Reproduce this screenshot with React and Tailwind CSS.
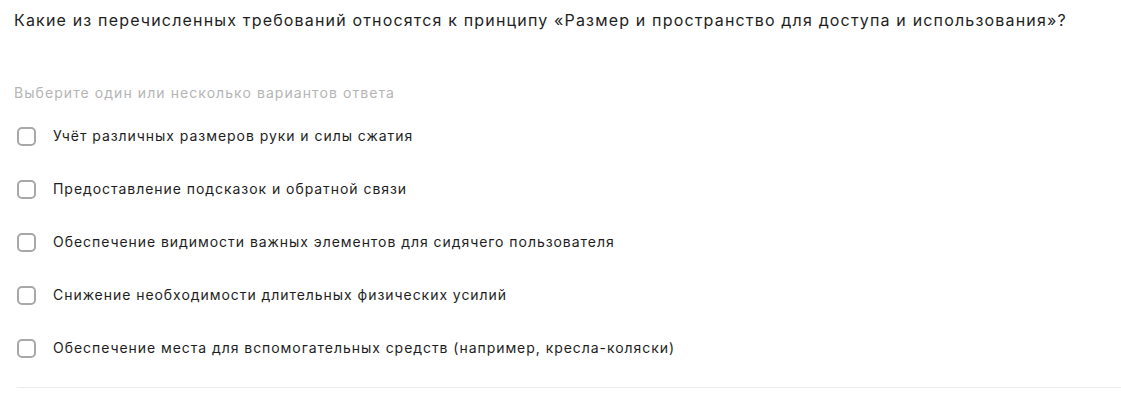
export default function App() {
  const options = [
    "Учёт различных размеров руки и силы сжатия",
    "Предоставление подсказок и обратной связи",
    "Обеспечение видимости важных элементов для сидячего пользователя",
    "Снижение необходимости длительных физических усилий",
    "Обеспечение места для вспомогательных средств (например, кресла-коляски)",
  ];
  return (
    <div className="bg-white w-[1121px] h-[403px] pl-[14px] pt-[9px]" style={{ fontFamily: "Inter, 'Open Sans', sans-serif" }}>
      <div className="text-[16px] leading-[22px] text-[#1e1e1e] tracking-[1.17px]">
        Какие из перечисленных требований относятся к принципу «Размер и пространство для доступа и использования»?
      </div>
      <div className="mt-[52px] text-[14px] leading-[20px] text-[#b5b5b5] tracking-[1.07px]">Выберите один или несколько вариантов ответа</div>
      <div className="mt-[24px] pl-[3px] flex flex-col gap-[35px]">
        {options.map((o) => (
          <div key={o} className="flex items-center h-[18px]">
            <div className="w-[19px] h-[19px] rounded-[5px] border-2 border-[#a8a8a8] shrink-0" />
            <span className="ml-[17px] text-[14px] leading-[18px] text-[#1e1e1e] tracking-[0.95px]">{o}</span>
          </div>
        ))}
      </div>
      <div className="mt-[30px] ml-[3px] h-px bg-[#ebebeb]" />
    </div>
  );
}
